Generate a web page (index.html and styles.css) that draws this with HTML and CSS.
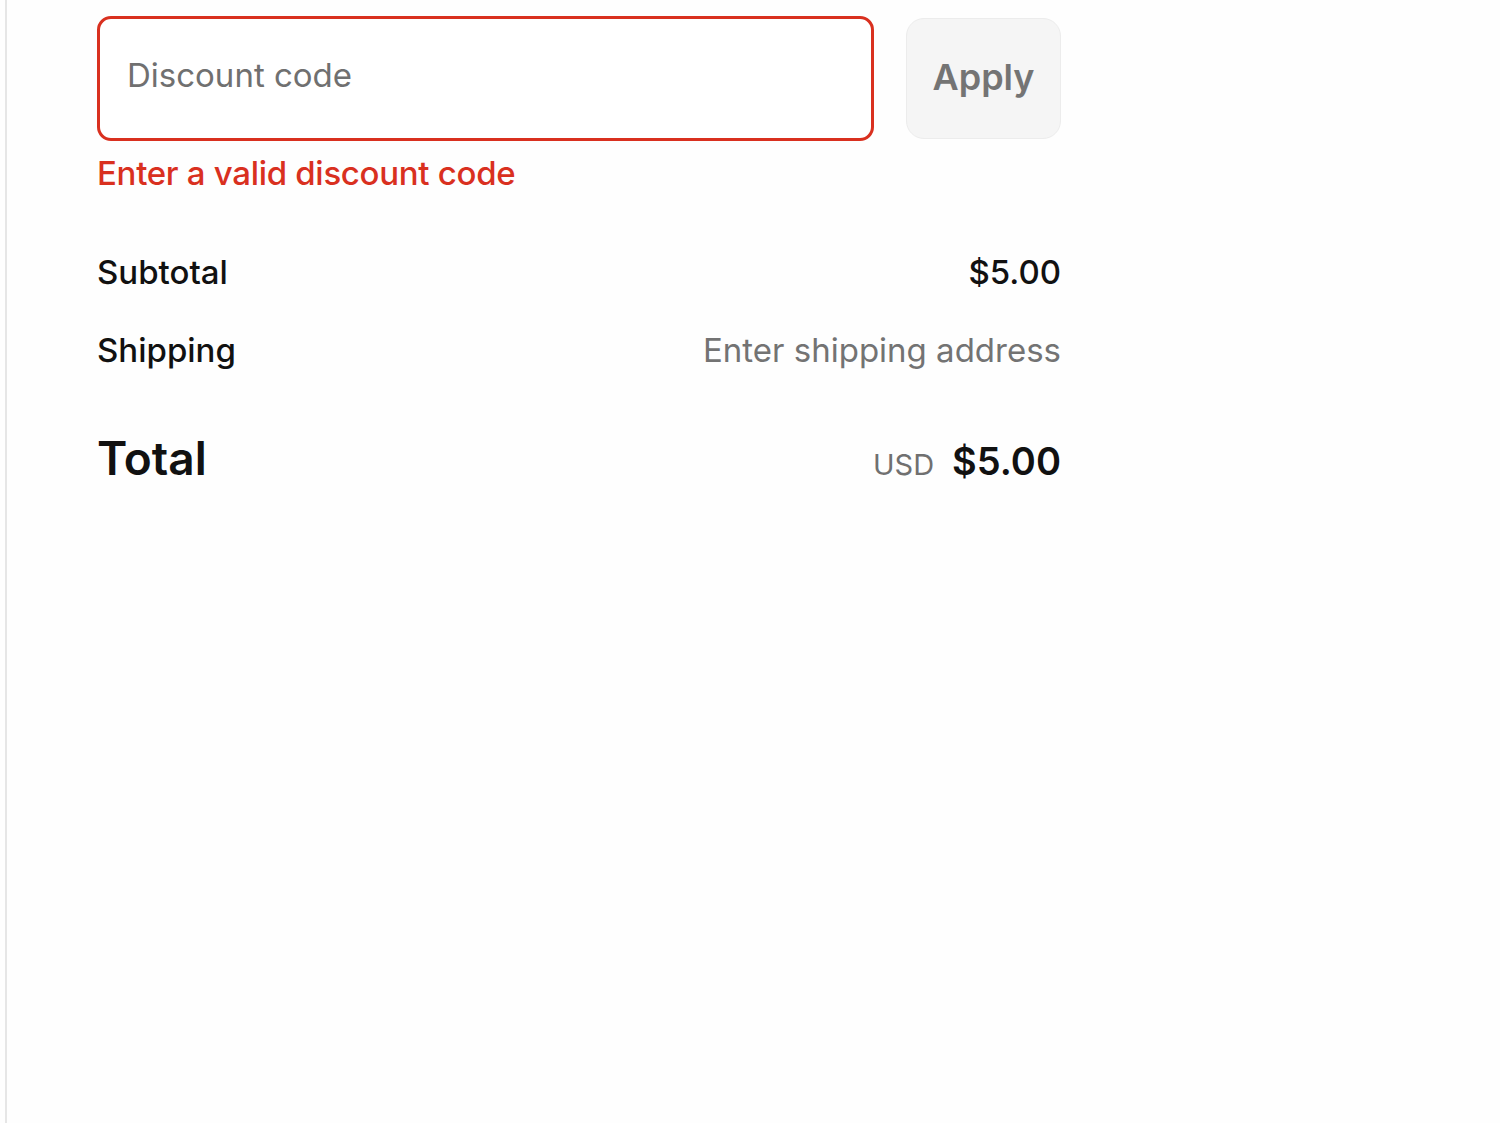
FILE: index.html
```html
<!DOCTYPE html>
<html lang="en">
<head>
    <meta charset="UTF-8">
    <meta name="viewport" content="width=device-width, initial-scale=1.0">
    <title>Order summary</title>
    <link rel="stylesheet" href="styles.css">
</head>
<body>
    <div class="page">
        <div class="summary">
            <div class="discount">
                <div class="discount-row">
                    <input class="discount-input" type="text" placeholder="Discount code">
                    <button class="apply-btn">Apply</button>
                </div>
                <div class="error">Enter a valid discount code</div>
            </div>

            <div class="lines">
                <div class="line">
                    <span class="label">Subtotal</span>
                    <span class="value">$5.00</span>
                </div>
                <div class="line">
                    <span class="label">Shipping</span>
                    <span class="value muted">Enter shipping address</span>
                </div>
            </div>

            <div class="total">
                <span class="total-label">Total</span>
                <span class="total-value"><span class="currency">USD</span>$5.00</span>
            </div>
        </div>
    </div>
</body>
</html>
```

FILE: styles.css
```css
body {
    margin: 0;
    background-color: #fefefe;
    font-family: Inter, "Noto Sans", Arial, sans-serif;
    color: #111;
}
.page {
    margin-left: 5px;
    min-height: 100vh;
    border-left: 2px solid #e6e6e6;
    padding: 16px 0 0 90px;
    box-sizing: border-box;
}
.summary {
    width: 964px;
}
.discount-row {
    display: flex;
    gap: 32px;
    align-items: center;
}
.discount-input {
    flex: 1;
    height: 125px;
    box-sizing: border-box;
    border: 3px solid #d9301f;
    border-radius: 14px;
    padding: 0 27px 8px;
    font-family: inherit;
    font-size: 33px;
    color: #111;
    background: #fff;
    outline: none;
}
.discount-input::placeholder {
    color: #707070;
}
.apply-btn {
    width: 155px;
    height: 121px;
    border: 1px solid #ececec;
    border-radius: 18px;
    background-color: #f5f5f5;
    color: #747474;
    font-family: inherit;
    font-size: 36px;
    font-weight: 600;
    padding: 0 0 4px;
}
.error {
    color: #d9301f;
    font-size: 33px;
    font-weight: 500;
    letter-spacing: -0.3px;
    margin-top: 12px;
}
.lines {
    margin-top: 59px;
    display: flex;
    flex-direction: column;
    gap: 38px;
}
.line {
    display: flex;
    justify-content: space-between;
    align-items: center;
    font-size: 33px;
    line-height: 40px;
}
.label {
    font-weight: 500;
}
.value {
    font-weight: 500;
}
.muted {
    color: #737373;
    font-weight: 400;
}
.total {
    margin-top: 60px;
    display: flex;
    justify-content: space-between;
    align-items: baseline;
}
.total-label {
    font-size: 46px;
    font-weight: 600;
}
.total-value {
    font-size: 38px;
    font-weight: 600;
}
.currency {
    font-size: 29px;
    font-weight: 400;
    color: #707070;
    margin-right: 18px;
}
```
